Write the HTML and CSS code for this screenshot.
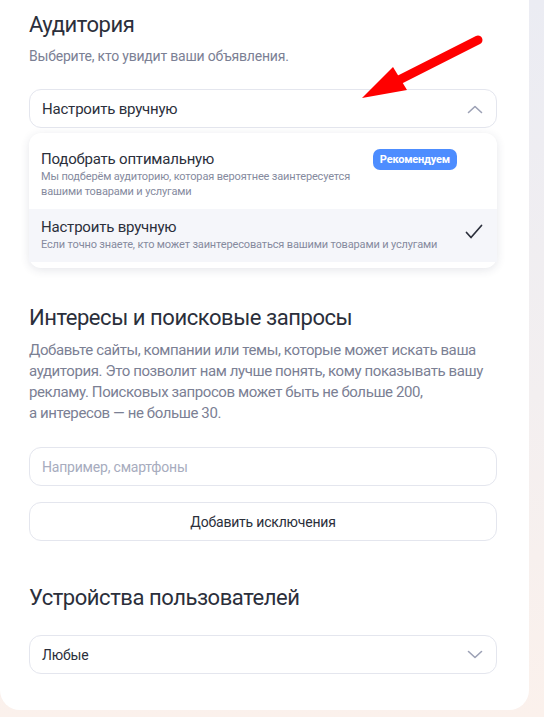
FILE: index.html
```html
<!DOCTYPE html>
<html lang="ru">
<head>
    <meta charset="UTF-8">
    <meta name="viewport" content="width=device-width, initial-scale=1.0">
    <title>Аудитория</title>
    <link rel="stylesheet" href="styles.css">
</head>
<body>
    <div class="card">
        <section class="block">
            <h2 class="block-title">Аудитория</h2>
            <p class="block-hint">Выберите, кто увидит ваши объявления.</p>

            <div class="select select-open">
                <span class="select-value">Настроить вручную</span>
                <svg class="select-arrow" width="16" height="10" viewBox="0 0 16 10">
                    <path d="M1.5 8.5 L8 2.5 L14.5 8.5" fill="none" stroke="#9ca1b5" stroke-width="1.6" stroke-linecap="round" stroke-linejoin="round"/>
                </svg>
            </div>

            <ul class="menu">
                <li class="menu-item">
                    <div class="menu-text">
                        <div class="menu-title">Подобрать оптимальную</div>
                        <div class="menu-desc">Мы подберём аудиторию, которая вероятнее заинтересуется<br>вашими товарами и услугами</div>
                    </div>
                    <span class="badge">Рекомендуем</span>
                </li>
                <li class="menu-item menu-item-active">
                    <div class="menu-text">
                        <div class="menu-title">Настроить вручную</div>
                        <div class="menu-desc">Если точно знаете, кто может заинтересоваться вашими товарами и услугами</div>
                    </div>
                    <svg class="check" width="18" height="16" viewBox="0 0 18 16">
                        <path d="M1.5 8.5 L6 13.5 L16.5 1.5" fill="none" stroke="#2b2f3b" stroke-width="1.7" stroke-linecap="round" stroke-linejoin="round"/>
                    </svg>
                </li>
            </ul>
        </section>

        <section class="block block-interests">
            <h2 class="block-title">Интересы и поисковые запросы</h2>
            <p class="block-text">Добавьте сайты, компании или темы, которые может искать ваша<br>аудитория. Это позволит нам лучше понять, кому показывать вашу<br>рекламу. Поисковых запросов может быть не больше 200,<br>а интересов — не больше 30.</p>

            <div class="field">
                <input class="field-input" type="text" placeholder="Например, смартфоны">
            </div>
            <button class="btn-outline">Добавить исключения</button>
        </section>

        <section class="block block-devices">
            <h2 class="block-title">Устройства пользователей</h2>
            <div class="select">
                <span class="select-value select-value-small">Любые</span>
                <svg class="select-arrow" width="16" height="10" viewBox="0 0 16 10">
                    <path d="M1.5 1.5 L8 7.5 L14.5 1.5" fill="none" stroke="#9ca1b5" stroke-width="1.6" stroke-linecap="round" stroke-linejoin="round"/>
                </svg>
            </div>
        </section>

        <!-- стрелка-пометка поверх скриншота -->
        <svg class="pointer" width="140" height="80" viewBox="0 0 140 80">
            <line x1="128" y1="15" x2="45" y2="57" stroke="#ff0000" stroke-width="9" stroke-linecap="round"/>
            <polygon points="12,73 43,42 57,65" fill="#ff0000"/>
        </svg>
    </div>
</body>
</html>
```

FILE: styles.css
```css
* {
    margin: 0;
    padding: 0;
    box-sizing: border-box;
    font-family: Roboto, 'Liberation Sans', sans-serif;
}

body {
    background: linear-gradient(180deg, #ebecf3 0%, #f3eff0 55%, #fbf1ec 100%);
    min-height: 100vh;
    overflow: hidden;
}

.card {
    position: relative;
    width: 529px;
    background-color: #ffffff;
    border-radius: 0 0 20px 20px;
    padding: 11px 32px 36px 29px;
}

.block-title {
    font-size: 22px;
    line-height: 28px;
    font-weight: 400;
    letter-spacing: -0.45px;
    color: #2b2f3b;
}

.block-hint {
    margin-top: 8px;
    font-size: 14px;
    line-height: 18px;
    letter-spacing: -0.2px;
    color: #7b8094;
}

.select {
    margin-top: 24px;
    height: 39px;
    border: 1px solid #e4e6ee;
    border-radius: 12px;
    display: flex;
    align-items: center;
    justify-content: space-between;
    padding: 0 13px 0 12px;
}

.select-value {
    font-size: 15px;
    letter-spacing: -0.2px;
    color: #2b2f3b;
}

.select-value-small {
    font-size: 14px;
}

.menu {
    list-style: none;
    margin-top: 5px;
    background-color: #ffffff;
    border-radius: 12px;
    box-shadow: 0 2px 10px rgba(40, 48, 80, 0.12);
    padding: 8px 0 6px;
}

.menu-item {
    display: flex;
    justify-content: space-between;
    align-items: flex-start;
    padding: 8px 14px 10px 12px;
}

.menu-item-active {
    background-color: #f5f6fa;
    align-items: center;
    padding-bottom: 10px;
}

.menu-title {
    font-size: 15px;
    line-height: 20px;
    letter-spacing: -0.2px;
    color: #2b2f3b;
}

.menu-desc {
    font-size: 11px;
    line-height: 15px;
    letter-spacing: -0.15px;
    color: #858a9e;
}

.badge {
    margin-right: 26px;
    background-color: #4d8dff;
    color: #ffffff;
    font-size: 11px;
    font-weight: 700;
    line-height: 21px;
    letter-spacing: -0.2px;
    padding: 0 7px;
    border-radius: 7px;
}

.check {
    margin-top: -6px;
}

.block-interests {
    margin-top: 36px;
}

.block-text {
    margin-top: 8px;
    font-size: 15px;
    line-height: 21px;
    letter-spacing: -0.4px;
    color: #7b8094;
}

.field {
    margin-top: 23px;
    height: 39px;
    border: 1px solid #e4e6ee;
    border-radius: 12px;
    display: flex;
    align-items: center;
    padding: 0 12px;
}

.field-input {
    border: none;
    outline: none;
    width: 100%;
    font-size: 14px;
    letter-spacing: -0.2px;
    color: #2b2f3b;
    background: transparent;
}

.field-input::placeholder {
    color: #a7acbe;
}

.btn-outline {
    display: block;
    width: 100%;
    margin-top: 16px;
    height: 39px;
    border: 1px solid #e4e6ee;
    border-radius: 12px;
    background-color: #ffffff;
    font-size: 14px;
    letter-spacing: -0.2px;
    color: #2b2f3b;
    cursor: pointer;
}

.block-devices {
    margin-top: 43px;
}

.block-devices .select {
    margin-top: 23px;
}

.pointer {
    position: absolute;
    left: 350px;
    top: 25px;
}
```
